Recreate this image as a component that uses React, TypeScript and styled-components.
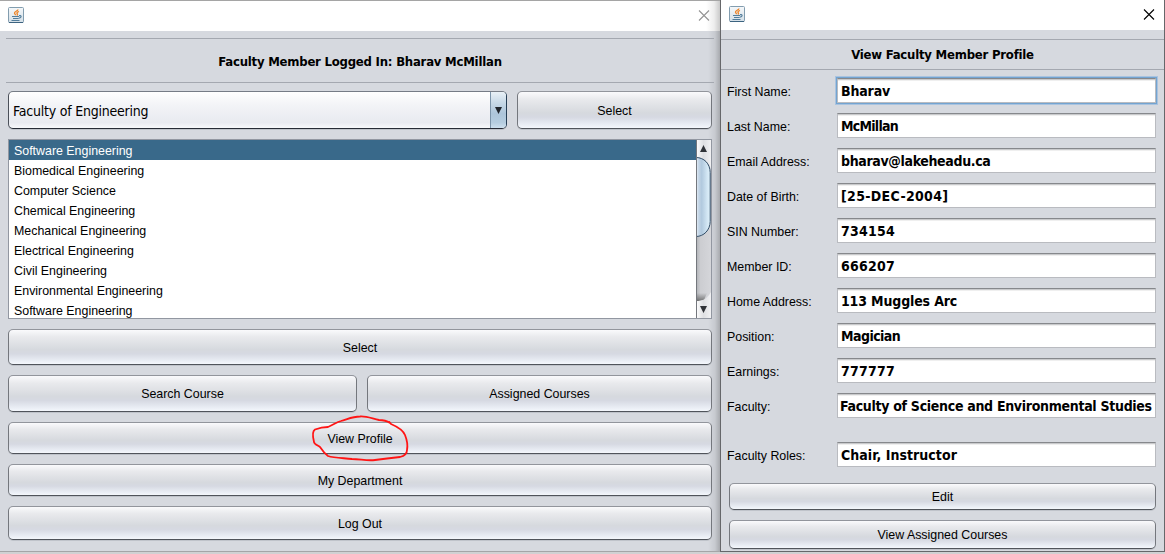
import React from "react";
import styled, { createGlobalStyle, css } from "styled-components";

const GlobalStyle = createGlobalStyle`
  * { box-sizing: border-box; }
  body { margin: 0; background: #d1d1d3; overflow: hidden; }
`;

const Desktop = styled.main`
  display: flex;
  width: 1165px;
  height: 554px;
  color: #000;
  font: 12.4px/16px "Liberation Sans", Arial, sans-serif;
  white-space: nowrap;
`;

const MainWindow = styled.section`
  display: flex;
  flex-direction: column;
  width: 720px;
  height: 552px;
  background: linear-gradient(90deg, transparent 708px, rgba(0, 0, 0, 0.07) 715px, rgba(0, 0, 0, 0.22)), #d6d9df;
  border-top: 1px solid #a5a5a5;
  border-bottom: 1px solid #a5a5a7;
`;

const ProfileWindow = styled.section`
  display: flex;
  flex-direction: column;
  width: 445px;
  height: 552px;
  background: #d6d9df;
  border: solid #66676a;
  border-width: 0 1px 1px 1px;
`;

const TitleBar = styled.header<{ $height: number; $inactive?: boolean }>`
  display: flex;
  flex: none;
  justify-content: space-between;
  height: ${(p) => p.$height}px;
  padding: 6px 9px 0 8px;
  background: ${(p) =>
    p.$inactive ? "linear-gradient(90deg, #fff 706px, #eee 714px, #cacaca)" : "#fff"};
  ${(p) => p.$inactive && "padding-right: 10px;"}
`;

const Heading = styled.h1<{ $profile?: boolean }>`
  display: flex;
  flex: none;
  align-items: center;
  justify-content: center;
  height: ${(p) => (p.$profile ? 31 : 45)}px;
  margin: ${(p) => (p.$profile ? "9px 0 0" : "7px 6px 0")};
  padding-top: ${(p) => (p.$profile ? 0 : 2)}px;
  border: solid #a4a8b0;
  border-width: 1px 0;
  font: bold 13px/16px "DejaVu Sans Condensed", "DejaVu Sans", sans-serif;
  font-stretch: condensed;
  letter-spacing: -0.22px;
`;

const MainBody = styled.div`
  display: flex;
  flex-direction: column;
  gap: 10px;
  padding: 8px 8px 0;
`;

const Row = styled.div`
  display: flex;
  gap: 10px;
`;

const Button = styled.button<{ $height: number; $width?: number }>`
  flex: ${(p) => (p.$width ? `0 0 ${p.$width}px` : "1 1 auto")};
  height: ${(p) => p.$height}px;
  padding: 1px 0 0;
  border: 1px solid;
  border-color: #92959c #74777d #50545b #74777d;
  border-radius: 5px;
  background: linear-gradient(#fafafc, #e9eaed 20%, #d6d9de 58%, #d6d9e2 70%, #e9edf4 90%, #f4f7fc);
  box-shadow: 0 1px 0 #bfc3ca;
  color: #000;
  font: inherit;
`;

const Combo = styled.div`
  display: flex;
  width: 499px;
  height: 38px;
  overflow: hidden;
  border: 1px solid;
  border-color: #767c86 #263e55 #262b36 #4b5059;
  border-radius: 5px;
  background: linear-gradient(#fff, #f3f4f7 35%, #e8eaf0 85%, #f7f8fb);
  box-shadow: 0 1px 0 #bfc3ca;
`;

const ComboValue = styled.span`
  flex: 1;
  padding: 11px 0 0 4px;
  font: 14px/17px "DejaVu Sans Condensed", "DejaVu Sans", sans-serif;
  font-stretch: condensed;
  letter-spacing: -0.22px;
`;

const ComboArrow = styled.span`
  display: flex;
  align-items: center;
  justify-content: center;
  width: 16px;
  border-left: 1px solid #7c94aa;
  background: linear-gradient(#e9f1f7, #c9dae8 28%, #adc5da 60%, #b5cde0 85%, #cde0ee);
`;

const ListBox = styled.div`
  display: flex;
  height: 180px;
  border: 1px solid #9297a1;
  background: #fff;
`;

const List = styled.ul`
  flex: 1;
  height: 178px;
  margin: 0;
  padding: 0;
  overflow: hidden;
  list-style: none;
`;

const Item = styled.li<{ $selected?: boolean }>`
  height: 20px;
  padding: 3px 5px 1px;
  ${(p) =>
    p.$selected &&
    css`
      background: #39698a;
      color: #fff;
    `}
`;

const ScrollBar = styled.div`
  width: 15px;
  height: 178px;
`;

const Form = styled.div`
  display: flex;
  flex-direction: column;
  gap: 10px;
  padding: 8px 8px 0 6px;
`;

const Field = styled.label<{ $spaced?: boolean }>`
  display: flex;
  align-items: center;
  height: 25px;
  margin-top: ${(p) => (p.$spaced ? 14 : 0)}px;
`;

const FieldName = styled.span`
  width: 110px;
  padding-top: 2px;
`;

const FieldValue = styled.span<{ $focused?: boolean; $tight?: boolean; $tracking: number }>`
  flex: none;
  width: 319px;
  height: 25px;
  padding: ${(p) => (p.$tight ? "4px 0 0 2px" : "4px 0 0 3px")};
  border: 1px solid;
  border-color: #86888c #b9bbc0 #b9bbc0;
  background: linear-gradient(#c9cacc 0 1px, #efefef 1px 2px, #fff 2px);
  font: bold 14px/16px "DejaVu Sans Condensed", "DejaVu Sans", sans-serif;
  font-stretch: condensed;
  letter-spacing: ${(p) => p.$tracking}px;
  ${(p) =>
    p.$focused &&
    css`
      box-shadow: 0 0 0 1px #73a4d1, 0 0 0 2px #a9c3df;
    `}
`;

const ProfileActions = styled.div`
  display: flex;
  flex-direction: column;
  gap: 10px;
  padding: 16px 8px 0 8px;
`;

const Scribble = styled.svg`
  position: absolute;
  left: 306px;
  top: 410px;
  pointer-events: none;
`;

const JavaIcon = () => (
  <svg width="16" height="17" viewBox="0 0 16 17" fill="none">
    <defs>
      <linearGradient id="cup" x1="0" y1="0" x2="0" y2="1">
        <stop offset="0" stopColor="#f5f8fa" />
        <stop offset="1" stopColor="#d4dfe7" />
      </linearGradient>
    </defs>
    <rect x="0.5" y="0.5" width="15" height="15" rx="1" fill="url(#cup)" stroke="#829daf" />
    <path d="M1 15.5h14" stroke="#3c6380" />
    <path d="M10 2.5C9.8 4.2 6.2 4.5 6.5 6.2c.1.8 1 1.2 1.1 2.1M11 4.5C9 5.1 8.5 6 9.2 6.7c.6.6.3 1.2-.3 1.7" stroke="#ed8428" strokeWidth="1.3" />
    <path d="M4 9.5h7M5 11.5h5.5M3.5 13.5h8M11 8.6h1.3c1.6.6.7 2.3-1.6 2.6" stroke="#527d9b" strokeWidth="1.1" />
  </svg>
);

const CloseIcon = ({ color }: { color: string }) => (
  <svg width="12" height="17" viewBox="0 0 12 17" fill="none">
    <path d="M1 3.5l10 10M11 3.5l-10 10" stroke={color} strokeWidth="1.1" />
  </svg>
);

const ScrollArt = () => (
  <svg width="15" height="178" viewBox="0 0 15 178">
    <defs>
      <linearGradient id="track">
        <stop offset="0" stopColor="#aeb0b4" />
        <stop offset=".3" stopColor="#cccdd1" />
        <stop offset="1" stopColor="#d5d6da" />
      </linearGradient>
      <linearGradient id="thumb">
        <stop offset="0" stopColor="#edf4fb" />
        <stop offset=".2" stopColor="#c2d4e5" />
        <stop offset=".4" stopColor="#b1c9de" />
        <stop offset=".8" stopColor="#d3e7f4" />
        <stop offset="1" stopColor="#e0f1fa" />
      </linearGradient>
      <linearGradient id="cap">
        <stop offset="0" stopColor="#fff" />
        <stop offset=".5" stopColor="#dedfe2" />
        <stop offset="1" stopColor="#f1f1f3" />
      </linearGradient>
      <linearGradient id="shade" x1="0" y1="0" x2="0" y2="1">
        <stop offset="0" stopColor="#555" stopOpacity="0" />
        <stop offset="1" stopColor="#555" stopOpacity=".85" />
      </linearGradient>
    </defs>
    <path d="M0 0h15v178H0z" fill="url(#track)" />
    <path d="M0 0h15v29C13 22 8 18 0 17z" fill="url(#cap)" />
    <path d="M0 153h11l-3 7-8 2z" fill="url(#shade)" />
    <path d="M0 161c7 0 11-2 15-9v26H0z" fill="url(#cap)" />
    <path d="M0 17.5c8 0 14 6 14.2 15v49C14 90 8 96.5 0 96.5" fill="url(#thumb)" stroke="#334e68" />
    <path d="M.5 0v178" stroke="#74777d" />
    <path d="M4 12l3.5-7 3.5 7zM4 166l3.5 7 3.5-7z" fill="#303338" />
  </svg>
);

const departments = [
  "Software Engineering", "Biomedical Engineering", "Computer Science",
  "Chemical Engineering", "Mechanical Engineering", "Electrical Engineering",
  "Civil Engineering", "Environmental Engineering", "Software Engineering",
];

const profile: { name: string; value: string; tracking: number }[] = [
  { name: "First Name:", value: "Bharav", tracking: -0.15 },
  { name: "Last Name:", value: "McMillan", tracking: -0.75 },
  { name: "Email Address:", value: "bharav@lakeheadu.ca", tracking: -0.35 },
  { name: "Date of Birth:", value: "[25-DEC-2004]", tracking: 0.32 },
  { name: "SIN Number:", value: "734154", tracking: 0.25 },
  { name: "Member ID:", value: "666207", tracking: 0.25 },
  { name: "Home Address:", value: "113 Muggles Arc", tracking: -0.15 },
  { name: "Position:", value: "Magician", tracking: -0.55 },
  { name: "Earnings:", value: "777777", tracking: 0.25 },
  { name: "Faculty:", value: "Faculty of Science and Environmental Studies", tracking: -0.3 },
  { name: "Faculty Roles:", value: "Chair, Instructor", tracking: 0.05 },
];

export default function App() {
  return (
    <>
      <GlobalStyle />
      <Desktop>
        <MainWindow>
          <TitleBar $height={30} $inactive>
            <JavaIcon />
            <CloseIcon color="#939393" />
          </TitleBar>
          <Heading>Faculty Member Logged In: Bharav McMillan</Heading>
          <MainBody>
            <Row>
              <Combo>
                <ComboValue>Faculty of Engineering</ComboValue>
                <ComboArrow>
                  <svg width="7" height="7" viewBox="0 0 7 7">
                    <path d="M0 0h7L3.5 7z" fill="#20252c" />
                  </svg>
                </ComboArrow>
              </Combo>
              <Button $height={38} $width={195}>Select</Button>
            </Row>
            <ListBox>
              <List>
                {departments.map((name, i) => (
                  <Item key={i} $selected={i === 0}>{name}</Item>
                ))}
              </List>
              <ScrollBar><ScrollArt /></ScrollBar>
            </ListBox>
            <Button $height={36}>Select</Button>
            <Row>
              <Button $height={37} $width={349}>Search Course</Button>
              <Button $height={37}>Assigned Courses</Button>
            </Row>
            <Button $height={32}>View Profile</Button>
            <Button $height={32}>My Department</Button>
            <Button $height={34}>Log Out</Button>
          </MainBody>
        </MainWindow>
        <ProfileWindow>
          <TitleBar $height={30}>
            <JavaIcon />
            <CloseIcon color="#000" />
          </TitleBar>
          <Heading $profile>View Faculty Member Profile</Heading>
          <Form>
            {profile.map(({ name, value, tracking }, i) => (
              <Field key={name} $spaced={i === 10}>
                <FieldName>{name}</FieldName>
                <FieldValue $focused={i === 0} $tight={i === 9} $tracking={tracking}>{value}</FieldValue>
              </Field>
            ))}
          </Form>
          <ProfileActions>
            <Button $height={27}>Edit</Button>
            <Button $height={29}>View Assigned Courses</Button>
          </ProfileActions>
        </ProfileWindow>
        <Scribble width="106" height="54" viewBox="306 410 106 54" fill="none">
          <path
            d="M389 421.5L391 424C398 427 403 430 405 435C407 440 408 445 407 450C407 454 404 456 400 457C390 458 382 459 375 460C367 461 360 459 352 459C343 458 334 458 328 456C324 453 322 450 320 447C317 445 314 444 314 442C312.500 436 312.500 431 315 429.500C319 428 324 427 328 427C333 425 337 422 341 421C348 419 353 416.500 360 416.500C367 416 373 419 379 420C384 420 387 421 390 423"
            stroke="#ff1515"
            strokeWidth="1.8"
            strokeLinejoin="round"
          />
        </Scribble>
      </Desktop>
    </>
  );
}
